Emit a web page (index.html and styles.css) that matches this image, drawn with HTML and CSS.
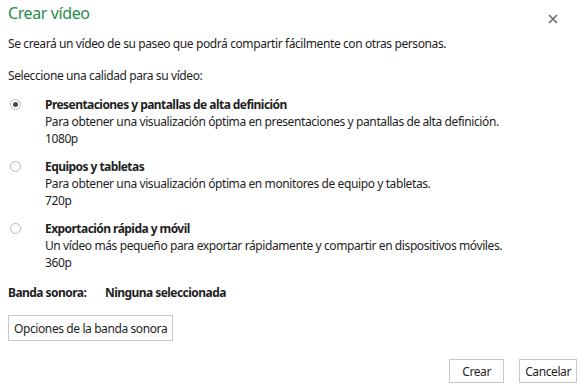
FILE: index.html
```html
<!DOCTYPE html>
<html lang="es">
<head>
  <meta charset="UTF-8">
  <title>Crear vídeo</title>
  <link rel="stylesheet" href="styles.css">
</head>
<body>
  <div class="dialog">
    <div class="header">
      <h1>Crear vídeo</h1>
      <button class="close-btn" aria-label="Cerrar">
        <svg width="10" height="10" viewBox="0 0 10 10">
          <path d="M1 1 L9 9 M9 1 L1 9" stroke="#6b6b6b" stroke-width="1.6" fill="none"/>
        </svg>
      </button>
    </div>
    <p class="intro">Se creará un vídeo de su paseo que podrá compartir fácilmente con otras personas.</p>
    <p class="prompt">Seleccione una calidad para su vídeo:</p>

    <div class="options">
      <label class="option">
        <span class="radio checked"></span>
        <span class="option-text">
          <strong>Presentaciones y pantallas de alta definición</strong>
          <span>Para obtener una visualización óptima en presentaciones y pantallas de alta definición.</span>
          <span>1080p</span>
        </span>
      </label>
      <label class="option">
        <span class="radio"></span>
        <span class="option-text">
          <strong>Equipos y tabletas</strong>
          <span>Para obtener una visualización óptima en monitores de equipo y tabletas.</span>
          <span>720p</span>
        </span>
      </label>
      <label class="option">
        <span class="radio"></span>
        <span class="option-text">
          <strong>Exportación rápida y móvil</strong>
          <span>Un vídeo más pequeño para exportar rápidamente y compartir en dispositivos móviles.</span>
          <span>360p</span>
        </span>
      </label>
    </div>

    <div class="soundtrack">
      <span class="label">Banda sonora:</span>
      <span>Ninguna seleccionada</span>
    </div>
    <button class="btn">Opciones de la banda sonora</button>

    <div class="footer">
      <button class="btn footer-btn">Crear</button>
      <button class="btn footer-btn">Cancelar</button>
    </div>
  </div>
</body>
</html>
```

FILE: styles.css
```css
html, body {
  margin: 0;
  padding: 0;
  background-color: #ffffff;
  font-family: "Noto Sans", "Open Sans", sans-serif;
  font-size: 12px;
  letter-spacing: -0.4px;
  color: #1e1e1e;
}

.dialog {
  width: 582px;
  height: 392px;
  box-sizing: border-box;
  padding: 0 5px 0 8px;
  display: flex;
  flex-direction: column;
}

.header {
  display: flex;
  justify-content: space-between;
  align-items: center;
  height: 26px;
}

h1 {
  margin: 0;
  font-size: 16px;
  font-weight: normal;
  letter-spacing: -0.4px;
  color: #2b8a4f;
}

.close-btn {
  border: none;
  background: none;
  padding: 0;
  margin: 12px 19px 0 0;
  width: 10px;
  height: 10px;
  display: flex;
}

p {
  margin: 0;
}

.intro {
  margin-top: 9px;
}

.prompt {
  margin-top: 15px;
}

.options {
  margin-top: 12px;
  display: flex;
  flex-direction: column;
  gap: 11px;
}

.option {
  display: flex;
  align-items: flex-start;
}

.radio {
  width: 11px;
  height: 11px;
  border: 1px solid #b8b8b8;
  border-radius: 50%;
  box-sizing: border-box;
  margin: 3px 24px 0 2px;
  display: flex;
  justify-content: center;
  align-items: center;
  flex-shrink: 0;
}

.radio.checked::after {
  content: "";
  width: 5px;
  height: 5px;
  border-radius: 50%;
  background-color: #4a4a4a;
}

.option-text {
  display: flex;
  flex-direction: column;
  line-height: 17px;
}

.option-text strong,
.soundtrack {
  font-weight: bold;
  letter-spacing: -0.55px;
}

.soundtrack {
  margin-top: 13px;
  display: flex;
  white-space: nowrap;
}

.soundtrack .label {
  width: 97px;
}

.btn {
  font-family: inherit;
  font-size: 12px;
  letter-spacing: -0.4px;
  color: #1e1e1e;
  background-color: #ffffff;
  border: 1px solid #c8c8c8;
  padding: 0 5px;
  height: 26px;
  cursor: pointer;
}

.soundtrack + .btn {
  align-self: flex-start;
  margin-top: 14px;
}

.footer {
  margin-top: auto;
  margin-bottom: 9px;
  display: flex;
  justify-content: flex-end;
  gap: 15px;
}

.footer-btn {
  height: 24px;
  min-width: 55px;
}
```
